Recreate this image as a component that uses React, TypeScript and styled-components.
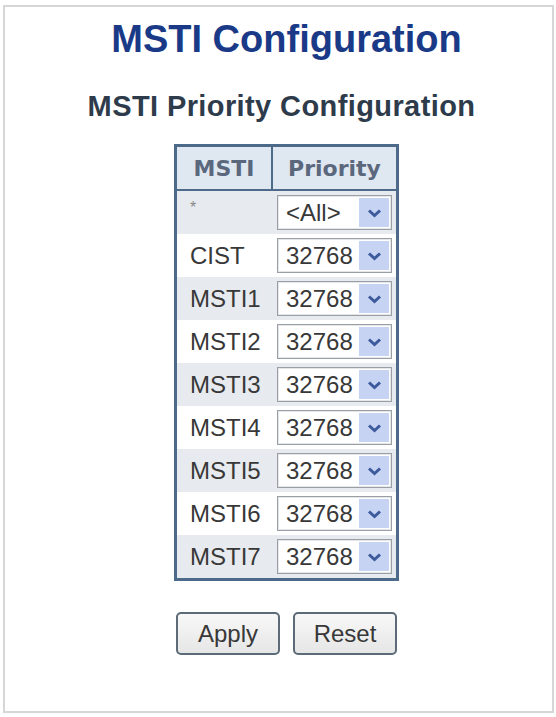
import React from "react";
import styled, { createGlobalStyle } from "styled-components";

const GlobalStyle = createGlobalStyle`
  html, body {
    margin: 0;
    padding: 0;
    background: #ffffff;
  }
  body {
    font-family: "Liberation Sans", Arial, sans-serif;
  }
`;

const Frame = styled.div`
  box-sizing: border-box;
  margin: 5px 0 0 3px;
  width: 551px;
  height: 708px;
  border: 2px solid #d6d6d6;
  padding-left: 16px;
  display: flex;
  flex-direction: column;
  align-items: center;
`;

const Title = styled.h1`
  margin: 13px 0 0;
  font-size: 38px;
  line-height: 38px;
  font-weight: bold;
  color: #1a3a88;
`;

const SubTitle = styled.h2`
  margin: 34px 10px 0 0;
  font-size: 29px;
  line-height: 28px;
  letter-spacing: 0.4px;
  font-weight: bold;
  color: #2e3b4b;
`;

const ConfigTable = styled.table`
  margin-top: 24px;
  border: 3px solid #4d6a8a;
  border-spacing: 0;
  border-collapse: separate;
`;

const HeadCell = styled.th<{ $divider?: boolean }>`
  height: 42px;
  padding: 0;
  background: #dfe7f1;
  border-bottom: 2px solid #4d6a8a;
  border-right: ${(p) => (p.$divider ? "2px solid #4d6a8a" : "none")};
  font-family: "DejaVu Sans", Verdana, sans-serif;
  font-size: 22px;
  font-weight: bold;
  color: #5b677c;
  text-align: center;
`;

const Row = styled.tr<{ $shaded: boolean }>`
  background: ${(p) => (p.$shaded ? "#e7eaee" : "#ffffff")};
`;

const LabelCell = styled.td`
  width: 83px;
  height: 43px;
  padding: 0 0 0 13px;
  font-size: 24px;
  color: #383838;
`;

const Star = styled.span`
  font-size: 16px;
  color: #8a8a8a;
  position: relative;
  top: -8px;
`;

const SelectCell = styled.td`
  width: 115px;
  padding: 0 4px;
`;

const PrioritySelect = styled.div`
  box-sizing: border-box;
  width: 115px;
  height: 35px;
  display: flex;
  align-items: stretch;
  border: 1px solid #9a9fa6;
  box-shadow: inset 0 0 0 1px #e4e6e9;
  background: #ffffff;
`;

const SelectValue = styled.span`
  flex: 1 1 auto;
  min-width: 0;
  display: flex;
  align-items: center;
  padding-left: 8px;
  font-size: 24px;
  color: #383838;
`;

const ArrowBox = styled.span`
  flex: 0 0 auto;
  width: 30px;
  margin: 2px;
  display: flex;
  align-items: center;
  justify-content: center;
  background: #c6d3f3;
`;

const ButtonRow = styled.div`
  margin-top: 31px;
  display: flex;
  gap: 13px;
`;

const Button = styled.button`
  box-sizing: border-box;
  width: 104px;
  height: 43px;
  border: 2px solid #5d6b78;
  border-radius: 5px;
  background: linear-gradient(#f8f8f8, #e6e6e6);
  font-family: "Liberation Sans", Arial, sans-serif;
  font-size: 24px;
  color: #383838;
  padding: 0;
`;

const Chevron = () => (
  <svg width="15" height="10" viewBox="0 0 15 10">
    <path d="M2 2.5 L7.5 7.5 L13 2.5" fill="none" stroke="#3c5a9c" strokeWidth="3" />
  </svg>
);

const rows = [
  { name: "*", value: "<All>" },
  { name: "CIST", value: "32768" },
  { name: "MSTI1", value: "32768" },
  { name: "MSTI2", value: "32768" },
  { name: "MSTI3", value: "32768" },
  { name: "MSTI4", value: "32768" },
  { name: "MSTI5", value: "32768" },
  { name: "MSTI6", value: "32768" },
  { name: "MSTI7", value: "32768" },
];

export default function App() {
  return (
    <>
      <GlobalStyle />
      <Frame>
        <Title>MSTI Configuration</Title>
        <SubTitle>MSTI Priority Configuration</SubTitle>
        <ConfigTable>
          <thead>
            <tr>
              <HeadCell $divider>MSTI</HeadCell>
              <HeadCell>Priority</HeadCell>
            </tr>
          </thead>
          <tbody>
            {rows.map((r, i) => (
              <Row key={r.name} $shaded={i % 2 === 0}>
                <LabelCell>{r.name === "*" ? <Star>*</Star> : r.name}</LabelCell>
                <SelectCell>
                  <PrioritySelect>
                    <SelectValue>{r.value}</SelectValue>
                    <ArrowBox>
                      <Chevron />
                    </ArrowBox>
                  </PrioritySelect>
                </SelectCell>
              </Row>
            ))}
          </tbody>
        </ConfigTable>
        <ButtonRow>
          <Button>Apply</Button>
          <Button>Reset</Button>
        </ButtonRow>
      </Frame>
    </>
  );
}
